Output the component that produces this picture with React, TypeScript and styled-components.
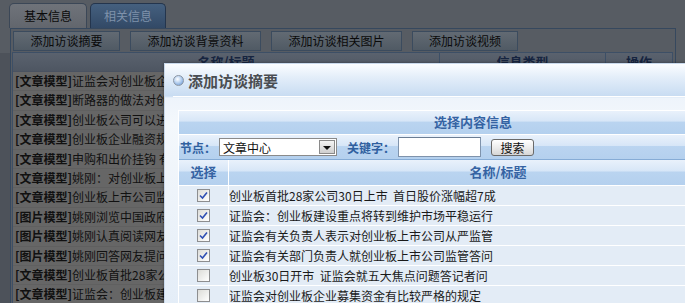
import styled, { createGlobalStyle } from 'styled-components';

const GlobalStyle = createGlobalStyle`
  html, body { margin: 0; padding: 0; }
  body {
    background: #575c63;
    font-family: "Noto Sans CJK SC", "Liberation Sans", sans-serif;
    font-size: 12px;
  }
`;

const Screen = styled.div`
  position: relative;
  width: 685px;
  height: 303px;
  overflow: hidden;
  background: linear-gradient(to right, #4d525a 10px, transparent 10px) 0 53px / 100% 100% no-repeat, #575c63;
`;

const TabBar = styled.div`
  display: flex;
  gap: 3px;
  height: 25px;
  padding: 3px 0 0 9px;
`;

const Tab = styled.div<{ $active?: boolean; $w: number }>`
  box-sizing: border-box;
  width: ${(p) => p.$w}px;
  height: 25px;
  border: 1px solid ${(p) => (p.$active ? '#24354d' : '#3b4757')};
  border-bottom: none;
  border-radius: 5px 5px 0 0;
  background: ${(p) =>
    p.$active ? 'linear-gradient(#45607f, #324966)' : 'linear-gradient(#6f737a, #62666d)'};
  color: ${(p) => (p.$active ? '#7f92ab' : '#0a0a0a')};
  font-size: 12px;
  line-height: 24px;
  text-align: center;
`;

const Panel = styled.div`
  box-sizing: border-box;
  width: 666px;
  margin-left: 10px;
  border: 1px solid #36485e;
  border-bottom: none;
  height: 280px;
`;

const ButtonRow = styled.div`
  display: flex;
  gap: 10px;
  padding: 2px 0 1px 2px;
`;

const ToolButton = styled.div<{ $w: number }>`
  box-sizing: border-box;
  width: ${(p) => p.$w}px;
  height: 20px;
  border: 1px solid #3b4b5e;
  background: linear-gradient(#626a73, #505a64);
  color: #0a0a0a;
  font-size: 12px;
  line-height: 18px;
  text-align: center;
`;

const ListTable = styled.div`
  margin: 0 2px 0 1px;
  border: 1px solid #3d4f66;
  border-bottom: none;
  background: #666666;
  height: 260px;
`;

const ListHead = styled.div`
  display: grid;
  grid-template-columns: 427px 166px 1fr;
  height: 18px;
  background: linear-gradient(#5a626e, #4e5662);
  border-bottom: 1px solid #4a5260;
`;

const HeadCell = styled.div<{ $last?: boolean }>`
  border-right: ${(p) => (p.$last ? 'none' : '1px solid #3d4f66')};
  color: #16243f;
  font-size: 13px;
  font-weight: bold;
  line-height: 18px;
  text-align: center;
`;

const ListRow = styled.div`
  box-sizing: border-box;
  height: 19.4px;
  padding-left: 2px;
  border-bottom: 1px solid #606060;
  color: #111;
  font-size: 12px;
  line-height: 18px;
  white-space: nowrap;
  overflow: hidden;
`;

const Kind = styled.b`
  font-weight: bold;
`;

/* dialog */

const Dialog = styled.div`
  position: absolute;
  left: 164px;
  top: 63px;
  width: 615px;
  height: 260px;
  border: 1px solid #c9d9ec;
  box-shadow: 0 0 3px rgba(0, 0, 0, 0.35);
  background: linear-gradient(#fbfdff 0, #e2edf9 14px, #c8dcf2 32px, #eef4fb 34px, #f4f8fc 60px, #e2ecf7 100%);
`;

const TitleBar = styled.div`
  display: flex;
  align-items: center;
  gap: 4px;
  height: 32px;
  margin-left: 8px;
  border-bottom: 1px solid #ffffff;
`;

const TitleDot = styled.span`
  box-sizing: border-box;
  width: 11px;
  height: 11px;
  border-radius: 50%;
  border: 1px solid #8c96a3;
  background: radial-gradient(circle at 40% 35%, #ffffff 0, #b9d2f0 45%, #5c8ed0 100%);
`;

const Title = styled.div`
  color: #4a4d52;
  font-size: 15px;
  font-weight: bold;
`;

const Body = styled.div`
  padding: 13px 0 0 13px;
`;

const Inner = styled.div`
  width: 588px;
  border-top: 1px solid #ffffff;
  border-left: 1px solid #ffffff;
`;

const twoTone = 'linear-gradient(#e9f1fb 0%, #d7e6f7 44%, #bad4f0 48%, #b4d0ee 100%)';

const SectionHead = styled.div`
  height: 23px;
  border-bottom: 1px solid #ffffff;
  background: ${twoTone};
  color: #3563a3;
  font-size: 13px;
  font-weight: bold;
  line-height: 21px;
  text-align: center;
`;

const FormRow = styled.div`
  display: flex;
  align-items: center;
  height: 24px;
  padding-left: 1px;
  border-bottom: 1px solid #86acd6;
  background: ${twoTone};
`;

const Label = styled.span<{ $w: number; $gap?: number }>`
  flex-shrink: 0;
  width: ${(p) => p.$w}px;
  margin-left: ${(p) => p.$gap ?? 0}px;
  color: #30609f;
  font-size: 12px;
  font-weight: bold;
  white-space: nowrap;
`;

const FakeSelect = styled.div`
  box-sizing: border-box;
  display: flex;
  align-items: center;
  justify-content: space-between;
  width: 118px;
  height: 18px;
  padding: 0 1px 0 3px;
  border: 1px solid #8a8a8a;
  background: #ffffff;
  color: #111;
  font-size: 12px;
`;

const SelectArrow = styled.span`
  box-sizing: border-box;
  display: flex;
  align-items: center;
  justify-content: center;
  width: 16px;
  height: 14px;
  border: 1px solid #8a8a8a;
  background: linear-gradient(#f4f4f4, #cfcfcf);

  &::after {
    content: '';
    border-left: 4px solid transparent;
    border-right: 4px solid transparent;
    border-top: 4px solid #111;
    margin-top: 2px;
  }
`;

const TextBox = styled.div`
  box-sizing: border-box;
  width: 83px;
  height: 20px;
  border: 1px solid #7f93ac;
  border-top-color: #6b7d94;
  background: #ffffff;
`;

const SearchButton = styled.div`
  box-sizing: border-box;
  width: 43px;
  height: 17px;
  margin-left: 10px;
  border: 1px solid #6a6a6a;
  border-radius: 3px;
  background: linear-gradient(#ffffff, #ececec 50%, #d6d6d6);
  color: #111;
  font-size: 12px;
  line-height: 15px;
  text-align: center;
`;

const Grid = styled.div`
  display: grid;
  grid-template-columns: 50px 1fr;
`;

const GridHead = styled.div<{ $first?: boolean }>`
  height: 25px;
  border-bottom: 1px solid #ffffff;
  border-right: ${(p) => (p.$first ? '1px solid #ffffff' : 'none')};
  background: ${twoTone};
  color: #3563a3;
  font-size: 13px;
  font-weight: bold;
  line-height: 23px;
  text-align: center;
`;

const Cell = styled.div<{ $first?: boolean }>`
  display: flex;
  align-items: center;
  justify-content: ${(p) => (p.$first ? 'center' : 'flex-start')};
  height: 19px;
  border-bottom: 1px solid #ffffff;
  border-right: ${(p) => (p.$first ? '1px solid #ffffff' : 'none')};
  background: #e3ecf6;
  color: #1a1a1a;
  font-size: 12px;
  line-height: 17px;
  white-space: pre;
`;

const Check = styled.span`
  box-sizing: border-box;
  display: flex;
  align-items: center;
  justify-content: center;
  width: 13px;
  height: 13px;
  border: 1px solid #8d8e90;
  background: linear-gradient(135deg, #dcdcd8, #ffffff);
`;

const listRows: [string, string][] = [
  ['文章模型', '证监会对创业板企业募集资金有比较严格的规定'],
  ['文章模型', '断路器的做法对创业板市场有何作用'],
  ['文章模型', '创业板公司可以进行再融资吗'],
  ['文章模型', '创业板企业融资规模如何确定'],
  ['文章模型', '申购和出价挂钩 有效防范炒新'],
  ['文章模型', '姚刚：对创业板上市公司从严监管'],
  ['文章模型', '创业板上市公司监管答问'],
  ['图片模型', '姚刚浏览中国政府网'],
  ['图片模型', '姚刚认真阅读网友留言'],
  ['图片模型', '姚刚回答网友提问'],
  ['文章模型', '创业板首批28家公司30日上市'],
  ['文章模型', '证监会：创业板建设重点将转到维护市场平稳运行'],
];

const items = [
  { title: '创业板首批28家公司30日上市  首日股价涨幅超7成', checked: true },
  { title: '证监会：创业板建设重点将转到维护市场平稳运行', checked: true },
  { title: '证监会有关负责人表示对创业板上市公司从严监管', checked: true },
  { title: '证监会有关部门负责人就创业板上市公司监管答问', checked: true },
  { title: '创业板30日开市  证监会就五大焦点问题答记者问', checked: false },
  { title: '证监会对创业板企业募集资金有比较严格的规定', checked: false },
];

export default function App() {
  return (
    <Screen>
      <GlobalStyle />
      <TabBar>
        <Tab $w={78}>基本信息</Tab>
        <Tab $w={76} $active>相关信息</Tab>
      </TabBar>
      <Panel>
        <ButtonRow>
          <ToolButton $w={107}>添加访谈摘要</ToolButton>
          <ToolButton $w={131}>添加访谈背景资料</ToolButton>
          <ToolButton $w={131}>添加访谈相关图片</ToolButton>
          <ToolButton $w={106}>添加访谈视频</ToolButton>
        </ButtonRow>
        <ListTable>
          <ListHead>
            <HeadCell>名称/标题</HeadCell>
            <HeadCell>信息类型</HeadCell>
            <HeadCell $last>操作</HeadCell>
          </ListHead>
          {listRows.map(([kind, text], i) => (
            <ListRow key={i}>
              <Kind>[{kind}]</Kind>
              {text}
            </ListRow>
          ))}
        </ListTable>
      </Panel>

      <Dialog>
        <TitleBar>
          <TitleDot />
          <Title>添加访谈摘要</Title>
        </TitleBar>
        <Body>
          <Inner>
            <SectionHead>选择内容信息</SectionHead>
            <FormRow>
              <Label $w={39}>节点：</Label>
              <FakeSelect>
                文章中心
                <SelectArrow />
              </FakeSelect>
              <Label $w={51} $gap={10}>关键字：</Label>
              <TextBox />
              <SearchButton>搜索</SearchButton>
            </FormRow>
            <Grid>
              <GridHead $first>选择</GridHead>
              <GridHead>名称/标题</GridHead>
              {items.map((it, i) => [
                <Cell key={`c${i}`} $first>
                  <Check>
                    {it.checked && (
                      <svg width="9" height="9" viewBox="0 0 9 9">
                        <path d="M1 4.5 L3.5 7 L8 1.5" fill="none" stroke="#2f4fb3" strokeWidth="1.6" />
                      </svg>
                    )}
                  </Check>
                </Cell>,
                <Cell key={`t${i}`}>{it.title}</Cell>,
              ])}
            </Grid>
          </Inner>
        </Body>
      </Dialog>
    </Screen>
  );
}
